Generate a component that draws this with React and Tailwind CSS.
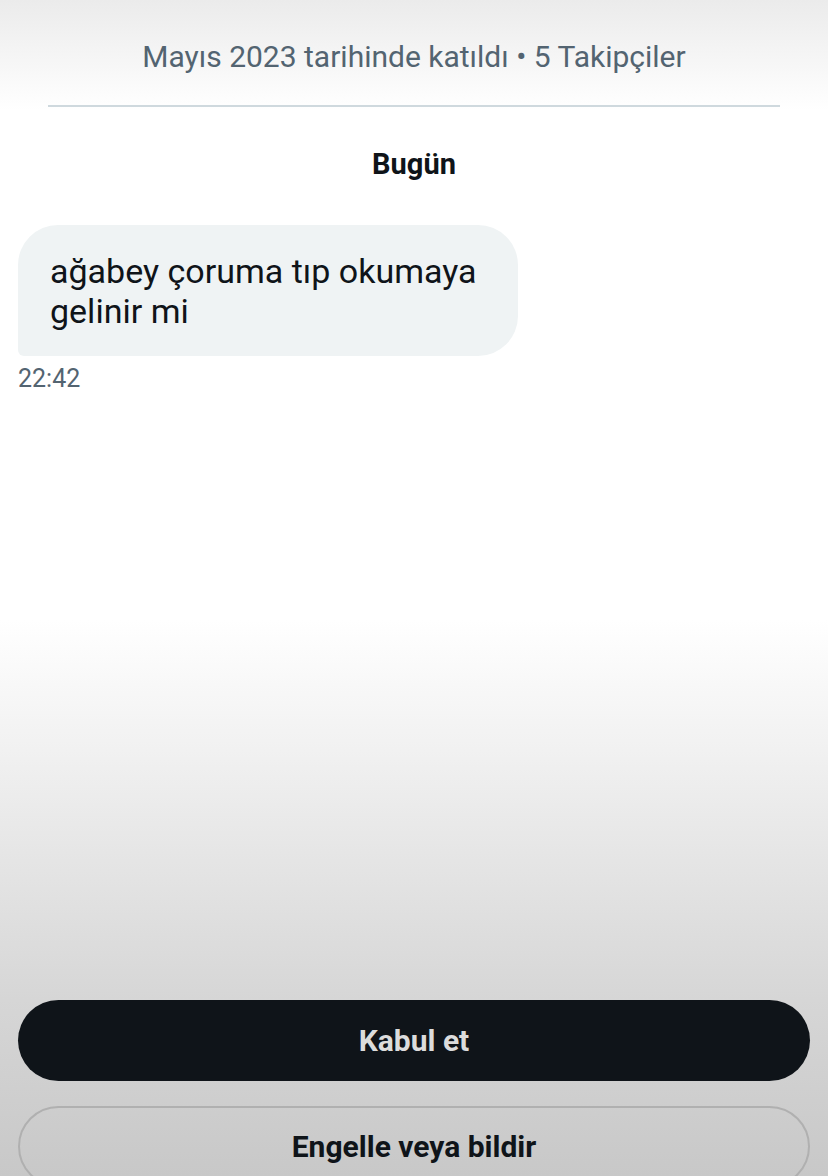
export default function App() {
  return (
    <div
      className="flex h-[1176px] w-[828px] flex-col overflow-hidden bg-[linear-gradient(to_bottom,#ebebeb_0px,#ffffff_110px,#ffffff_620px,#d6d6d6_1000px,#c8c8c8_1176px)]"
      style={{ fontFamily: "Roboto, 'Liberation Sans', sans-serif" }}
    >
      <div className="pt-[37px] text-center text-[30px] leading-[40px] text-[#536471]">
        Mayıs 2023 tarihinde katıldı • 5 Takipçiler
      </div>

      <div className="mx-12 mt-[28px] h-[2px] bg-[#cfd9de]" />

      <div className="mt-[40px] text-center text-[29px] font-bold leading-[34px] text-[#0f1419]">
        Bugün
      </div>

      <div className="mt-[44px] px-[18px]">
        <div className="w-[500px] rounded-[40px] rounded-bl-[6px] bg-[#eff3f4] px-8 pb-[25px] pt-[26px] text-[34px] leading-[40px] text-[#0f1419]">
          ağabey çoruma tıp okumaya
          <br />
          gelinir mi
        </div>
        <div className="mt-[8px] text-[25px] leading-[30px] text-[#536471]">22:42</div>
      </div>

      <div className="mt-auto mb-[-11px] flex flex-col gap-[25px] px-[18px]">
        <button className="h-[81px] rounded-full bg-[#0f1419] text-[30px] font-bold text-[#dcdcdc]">
          Kabul et
        </button>
        <button className="h-[81px] rounded-full border-2 border-[#b0b0b0] text-[30px] font-bold text-[#0f1419]">
          Engelle veya bildir
        </button>
      </div>
    </div>
  );
}
